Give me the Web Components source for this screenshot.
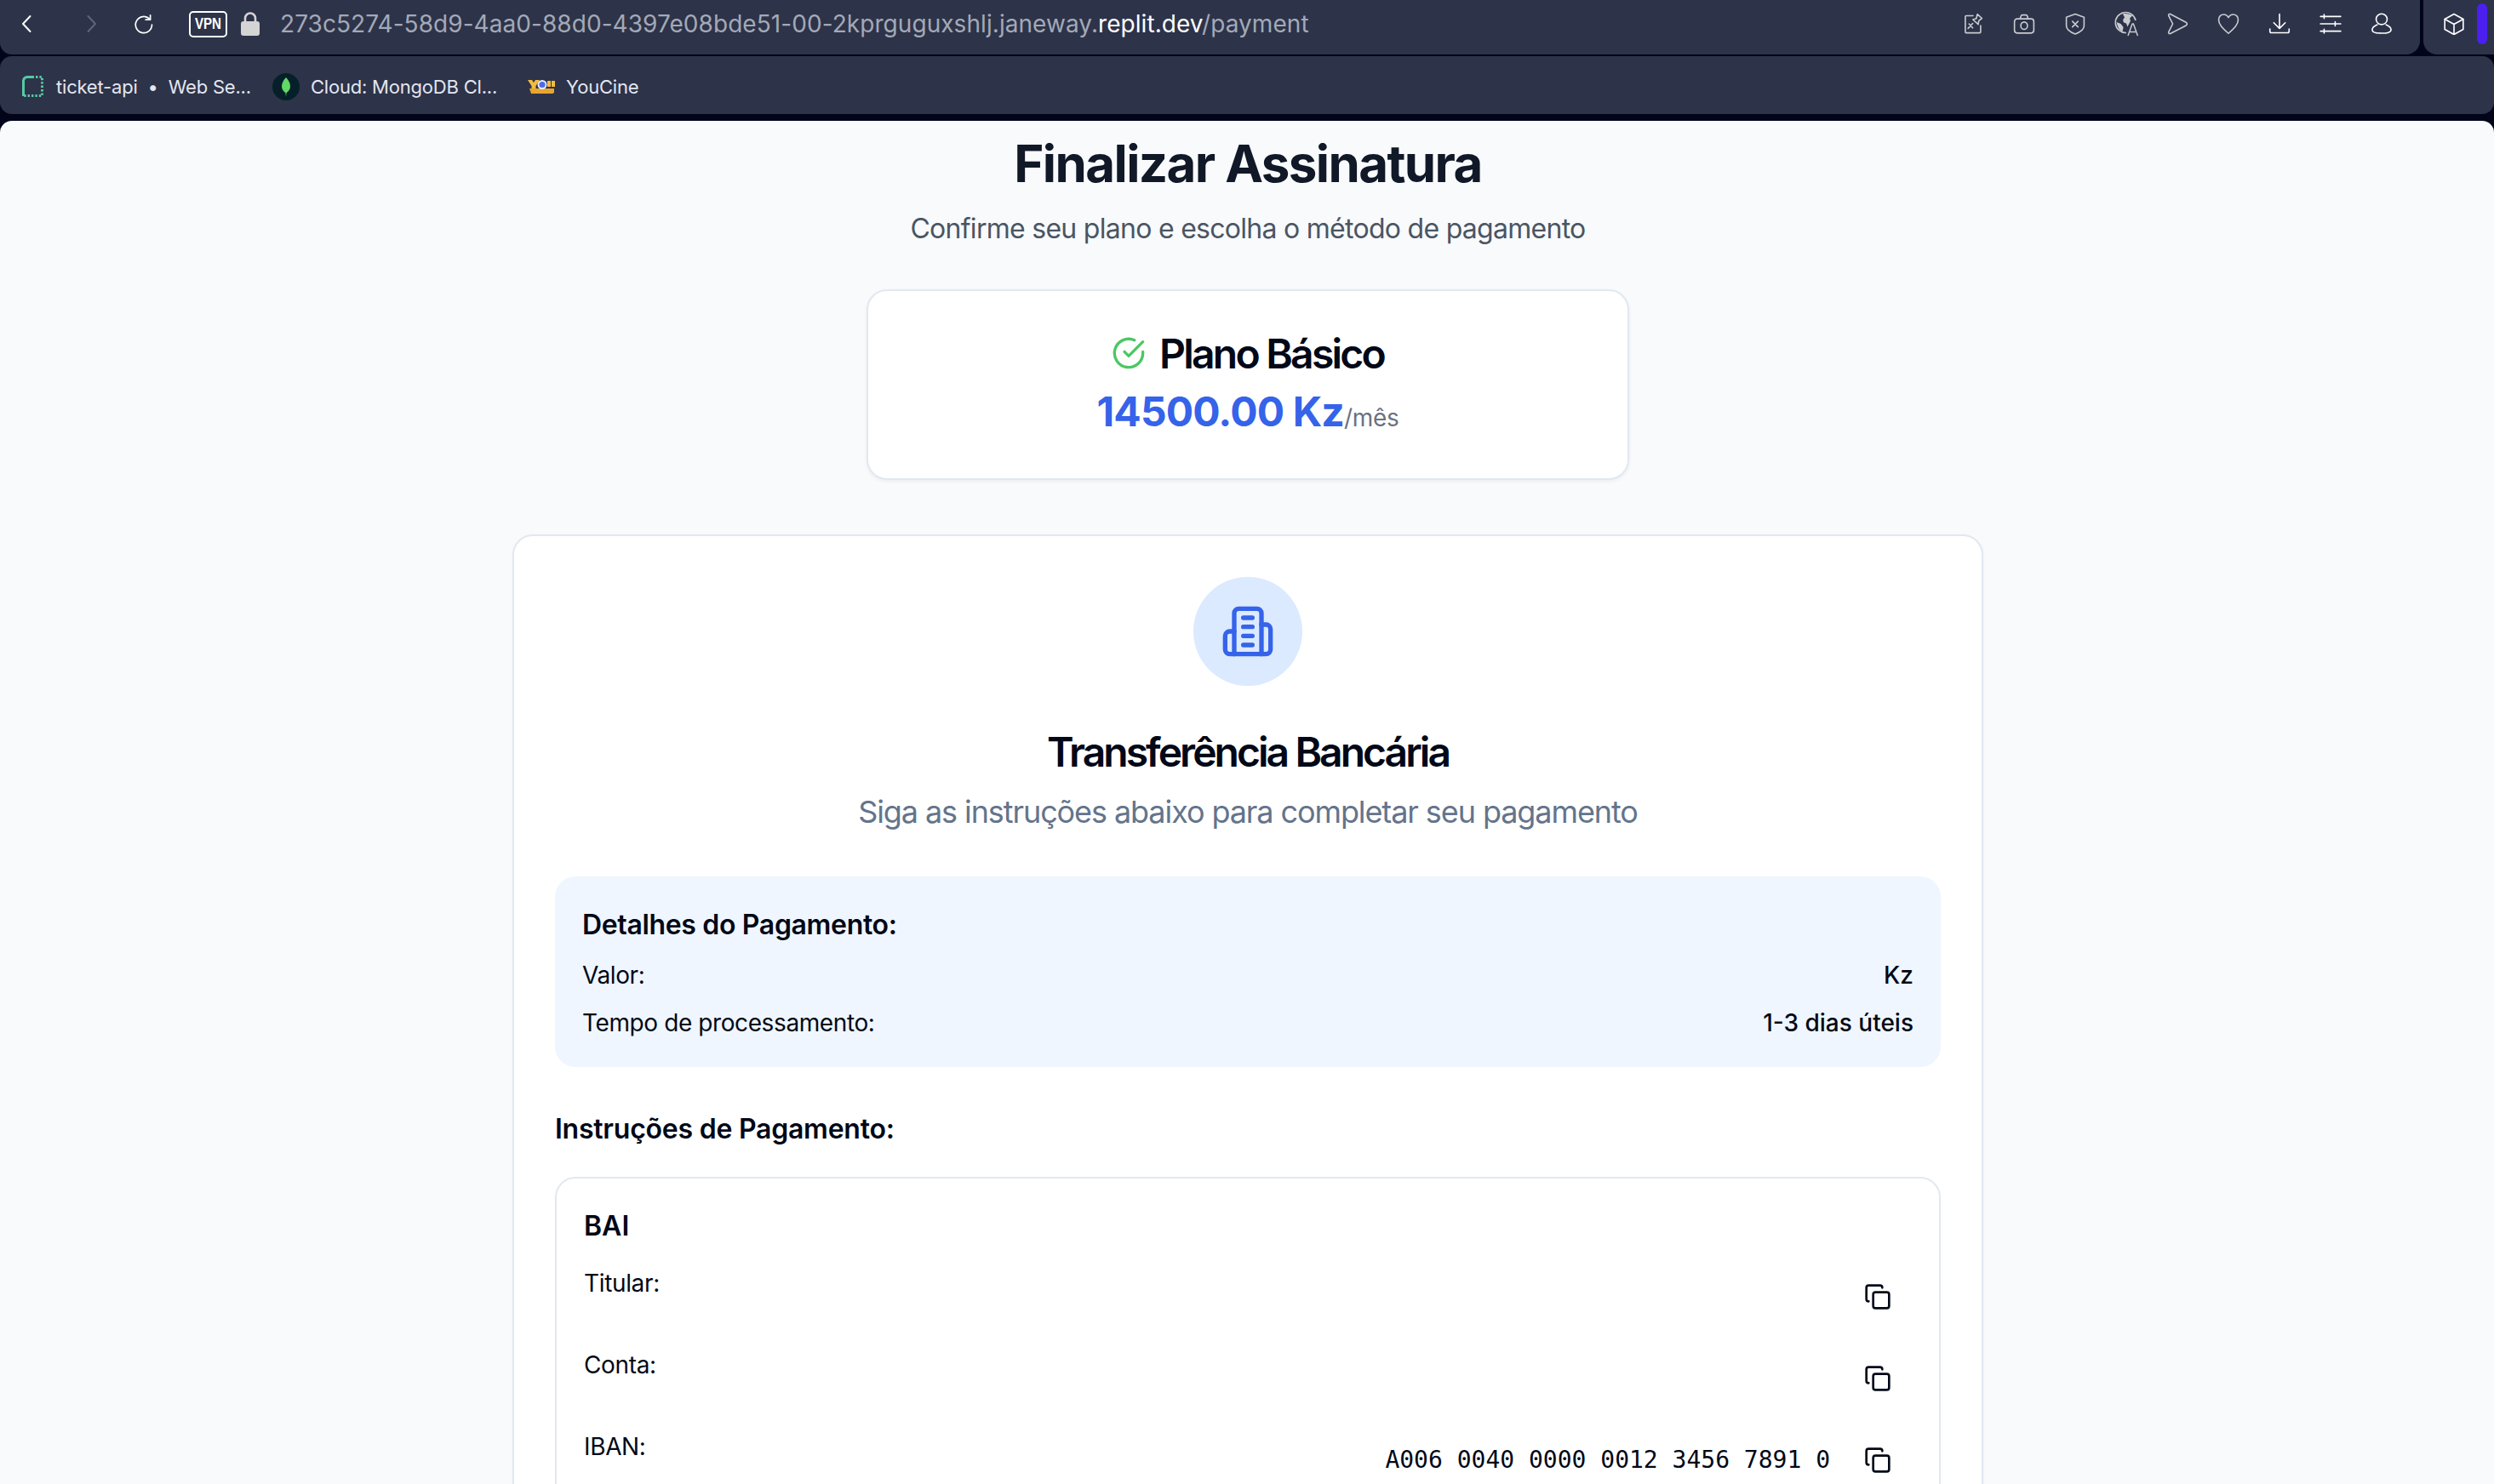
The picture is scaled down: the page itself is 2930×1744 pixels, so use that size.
<!DOCTYPE html>
<html lang="pt">
<head>
<meta charset="utf-8">
<title>Finalizar Assinatura</title>
<style>
  html, body { margin: 0; height: 100%; overflow: hidden; background: #02051a; }
  body { font-family: Inter, "Liberation Sans", sans-serif; color: #020817; }
</style>
</head>
<body>
<browser-chrome url-start="273c5274-58d9-4aa0-88d0-4397e08bde51-00-2kprguguxshlj.janeway." url-host="replit.dev" url-end="/payment"></browser-chrome>
<bookmark-bar>
  <bookmark-item icon="replit"><span>ticket-api</span><span class="dot">&nbsp;&nbsp;•&nbsp;&nbsp;</span><span>Web Se...</span></bookmark-item>
  <bookmark-item icon="mongo">Cloud: MongoDB Cl...</bookmark-item>
  <bookmark-item icon="youcine">YouCine</bookmark-item>
</bookmark-bar>
<payment-page>
  <plan-card slot="plan" name="Plano Básico" price="14500.00 Kz" period="/mês"></plan-card>
  <method-card slot="method" title="Transferência Bancária" subtitle="Siga as instruções abaixo para completar seu pagamento">
    <detail-box heading="Detalhes do Pagamento:">
      <detail-row label="Valor:" value="Kz"></detail-row>
      <detail-row label="Tempo de processamento:" value="1-3 dias úteis"></detail-row>
    </detail-box>
    <h-label>Instruções de Pagamento:</h-label>
    <bank-account name="BAI">
      <copy-row label="Titular:"></copy-row>
      <copy-row label="Conta:"></copy-row>
      <copy-row label="IBAN:" value="A006 0040 0000 0012 3456 7891 0"></copy-row>
    </bank-account>
  </method-card>
</payment-page>

<script>
// line icons, all drawn on a 24 box
const ICONS = {
  back: '<path d="M15.5 3 7 12l8.5 9"/>',
  forward: '<path d="M8.5 3 17 12l-8.5 9"/>',
  reload: '<path d="M18.6 6.2A9.6 9.6 0 1 0 21.5 13"/><path d="M19.6 1.8v5.4h-5.4" />',
  pin: '<path d="M12 3.2H4.6a1 1 0 0 0-1 1v16.6a1 1 0 0 0 1 1h14.6a1 1 0 0 0 1-1V14"/><path d="M16.6 1.6 21.6 6l-3.4 2.6-.6 4-5.8-5.2 3.8-1.2z"/><path d="m11.6 11.6-5 5.4M7.6 12l4 4.4"/>',
  camera: '<rect x="1.5" y="6.6" width="21" height="15.4" rx="3"/><path d="M7.6 6.6 8.6 3.4a1.4 1.4 0 0 1 1.3-1h4.2a1.4 1.4 0 0 1 1.3 1l1 3.2"/><ellipse cx="12" cy="14" rx="3.6" ry="4"/>',
  shield: '<path d="M12 1.4 21.6 4.8V14c0 4-4.4 7-9.6 9-5.2-2-9.6-5-9.6-9V4.8z"/><path d="m9 9.4 6 6M15 9.4l-6 6"/>',
  heart: '<path d="M12 22.4C5.6 16.6 1.4 12.6 1.4 7.6 1.4 4 4 1.8 6.8 1.8c2.2 0 4 1.2 5.2 3.4 1.2-2.2 3-3.4 5.2-3.4 2.8 0 5.4 2.2 5.4 5.8 0 5-4.2 9-10.6 14.8z"/>',
  play: '<path d="M2.6 3.4c-.6-1.6.8-2.6 2.2-1.8L21.4 10.4c1.6 1 1.6 2.4 0 3.4L4.8 22.4c-1.4.8-2.8-.2-2.2-1.8L7 12z"/>',
  download: '<path d="M12 1.5v15M5.8 10.8l6.2 6.2 6.2-6.2"/><path d="M1.6 17.5v2.6a1.6 1.6 0 0 0 1.6 1.6h17.6a1.6 1.6 0 0 0 1.6-1.6v-2.6"/>',
  sliders: '<path d="M1 4h22M1 12h22M1 20h22M5 1.8v4.4M17 9.8v4.4M5 17.8v4.4"/>',
  user: '<ellipse cx="12" cy="7" rx="6" ry="5.8"/><path d="M7.2 13C3.4 14.6 1.8 16.6 1.8 18.6c0 2.4 3 3.6 10.2 3.6s10.2-1.2 10.2-3.6c0-2-1.6-4-5.4-5.6"/>',
  box: '<path d="M12 1.4 22 7v11l-10 5.6L2 18V7z"/><path d="m2 7 10 5.4L22 7M12 12.4v11.2"/>',
  building: '<path d="M6 22V4a2 2 0 0 1 2-2h8a2 2 0 0 1 2 2v18Z"/><path d="M6 12H4a2 2 0 0 0-2 2v6a2 2 0 0 0 2 2h2"/><path d="M18 9h2a2 2 0 0 1 2 2v9a2 2 0 0 1-2 2h-2"/><path d="M10 6h4M10 10h4M10 14h4M10 18h4"/>',
  check: '<path d="M22 11.08V12a10 10 0 1 1-5.93-9.14"/><path d="M22 4 12 14.01l-3-3"/>',
  copy: '<rect x="8" y="8" width="14" height="14" rx="2"/><path d="M4 16c-1.1 0-2-.9-2-2V4c0-1.1.9-2 2-2h10c1.1 0 2 .9 2 2"/>'
}

customElements.define('line-icon', class extends HTMLElement {
  connectedCallback() {
    const size = this.getAttribute('size') || 24
    const weight = this.getAttribute('weight') || 2
    this.attachShadow({mode: 'open'}).innerHTML = `
      <style>
        :host { display: inline-flex; flex: none; color: inherit; }
        svg { display: block; }
      </style>
      <svg width="${size}" height="${size}" viewBox="0 0 24 24" fill="none" stroke="currentColor"
        stroke-width="${weight}" stroke-linecap="round" stroke-linejoin="round">${ICONS[this.getAttribute('name')]}</svg>`
  }
})

customElements.define('browser-chrome', class extends HTMLElement {
  connectedCallback() {
    const dim = ['pin', 'camera', 'shield', 'globe', 'play', 'heart']
    const bright = ['download', 'sliders', 'user']
    const globe = `<svg width="30" height="30" viewBox="0 0 30 30" fill="none" stroke="#c9cbd0" stroke-width="1.6" stroke-linejoin="round">
        <path d="M15 25.5A12 12 0 1 1 26 11"/>
        <path fill="#c9cbd0" stroke="none" d="M11 3.5c4 -1 9 0 11 2l-3 3 1 3-2 4-1.6 3-1.4-4-3-1-1-3 2-3zM3.6 13l5 2 3 4-1 5c-4-1-6-6-7-11z"/>
        <path d="M17 29l5-14h1.4l5 14M18.6 24.6h8.800" stroke-width="1.5"/></svg>`
    this.attachShadow({mode: 'open'}).innerHTML = `
      <style>
        :host { display: flex; gap: 4px; height: 64px; margin-bottom: 2px; }
        .bar { flex: 1; display: flex; align-items: center; background: #2d3349; border-radius: 0 0 16px 14px; padding: 0 15px 8px 0; }
        .nav { display: flex; align-items: center; color: #fff; }
        .nav line-icon:nth-child(1) { margin-left: 20px; }
        .nav line-icon:nth-child(2) { margin-left: 51px; color: #5f6577; }
        .nav line-icon:nth-child(3) { margin-left: 38px; }
        .vpn { margin-left: 41px; width: 45px; height: 31px; box-sizing: border-box; border: 2px solid #fff; border-radius: 5px;
          color: #fff; font: 700 18px/27px "Liberation Sans", sans-serif; text-align: center; }
        .vpn span { display: block; transform: scaleX(.84); }
        .lock { margin-left: 16px; display: block; }
        .url { margin-left: 24px; flex: 1; font: 400 28px/56px Inter, sans-serif; letter-spacing: 0.06px; color: #a3a9b7; white-space: nowrap; }
        .url b { font-weight: 400; color: #fff; }
        .tools { display: flex; }
        .tools > * { width: 60px; display: flex; justify-content: center; align-items: center; color: #c9cbd0; }
        .tools > .on { color: #fff; }
        .side { width: 83px; position: relative; background: #2d3349; border-radius: 0 0 0 16px; display: flex; align-items: center; color: #fff; padding: 0 0 8px 23px; box-sizing: border-box; }
        .mark { position: absolute; right: 8px; top: 4px; width: 12px; height: 48px; border-radius: 6px; background: #4a1ff0; }
      </style>
      <div class="bar">
        <div class="nav">
          <line-icon name="back" size="24"></line-icon>
          <line-icon name="forward" size="24"></line-icon>
          <line-icon name="reload" size="24" weight="1.7"></line-icon>
        </div>
        <div class="vpn"><span>VPN</span></div>
        <svg class="lock" width="22" height="28" viewBox="0 0 22 28"><path fill="none" stroke="#d4d4d4" stroke-width="2.6" d="M5 13V7.5a6 6 0 0 1 12 0V13"/><rect y="11" width="22" height="17" rx="3" fill="#d4d4d4"/></svg>
        <div class="url">${this.getAttribute('url-start')}<b>${this.getAttribute('url-host')}</b>${this.getAttribute('url-end')}</div>
        <div class="tools">
          ${dim.map(n => n == 'globe' ? `<span>${globe}</span>` : `<span><line-icon name="${n}" size="26" weight="1.5"></line-icon></span>`).join('')}
          ${bright.map(n => `<span class="on"><line-icon name="${n}" size="26" weight="1.5"></line-icon></span>`).join('')}
        </div>
      </div>
      <div class="side"><line-icon name="box" size="26" weight="1.5"></line-icon><i class="mark"></i></div>`
  }
})

customElements.define('bookmark-bar', class extends HTMLElement {
  constructor() {
    super()
    this.attachShadow({mode: 'open'}).innerHTML = `
      <style>
        :host { display: flex; align-items: center; height: 68px; background: #2d3349; border-radius: 14px; padding: 3px 0 0 26px; box-sizing: border-box; gap: 25px; }
      </style>
      <slot></slot>`
  }
})

customElements.define('bookmark-item', class extends HTMLElement {
  connectedCallback() {
    const marks = {
      replit: `<svg width="25" height="25" viewBox="0 0 25 25" fill="none" stroke="#56c9a4" stroke-width="3"><path d="M1.5 24V6a4.5 4.5 0 0 1 4.5-4.5h8"/><path stroke-dasharray="2.4 2" d="M16 1.5h7.5v22H2"/></svg>`,
      mongo: `<svg width="32" height="32" viewBox="0 0 32 32"><circle cx="16" cy="16" r="16" fill="#06202a"/><path fill="#62d866" d="M16 5c3 3.500 5 6.500 5 10.500 0 3.500-2.200 6-4.400 7.500L16 27.500l-.6-4.500C13.200 21.500 11 19 11 15.500c0-4 2-7 5-10.500z"/></svg>`,
      youcine: `<svg width="33" height="16" viewBox="0 0 33 16"><path fill="#f2bd3e" d="M0 0h5l2 3 2-3h5L9.500 7v3h-5V7zM23 1h4v7h-4zM28 1h4v7h-4z"/><path fill="#e8a52f" d="M2 10h29v5l-2 1H4z"/><circle cx="17" cy="5.500" r="5.500" fill="#e9edfb"/><circle cx="17" cy="5.500" r="3.600" fill="#4f6ae8"/></svg>`
    }
    const icon = this.getAttribute('icon')
    this.attachShadow({mode: 'open'}).innerHTML = `
      <style>
        :host { display: flex; align-items: center; gap: 13px; font: 400 22px/32px Inter, sans-serif; letter-spacing: -0.2px; color: #e4e6ef; white-space: nowrap; }
        :host([icon=replit]) { gap: 15px; }
        :host([icon=youcine]) { margin-left: 11px; gap: 12px; }
        svg { display: block; flex: none; }
      </style>
      ${marks[icon]}<span><slot></slot></span>`
  }
})

customElements.define('payment-page', class extends HTMLElement {
  constructor() {
    super()
    this.attachShadow({mode: 'open'}).innerHTML = `
      <style>
        :host { display: block; margin-top: 8px; height: 1602px; padding-left: 2px; box-sizing: border-box; overflow: hidden; background: #f8fafc; border-radius: 14px 14px 0 0; text-align: center; }
        .wrap { width: 1728px; margin: 0 auto; padding-top: 14px; }
        h1 { margin: 0; font: 700 60px/72px Inter, sans-serif; color: #111827; letter-spacing: -1.6px; }
        p { margin: 13px 0 0; font: 400 32px/56px Inter, sans-serif; color: #4b5563; letter-spacing: -0.72px; }
        ::slotted([slot=plan]) { margin: 43px auto 0; }
        ::slotted([slot=method]) { margin-top: 64px; }
      </style>
      <div class="wrap">
        <h1>Finalizar Assinatura</h1>
        <p>Confirme seu plano e escolha o método de pagamento</p>
        <slot name="plan"></slot>
        <slot name="method"></slot>
      </div>`
  }
})

customElements.define('plan-card', class extends HTMLElement {
  connectedCallback() {
    this.attachShadow({mode: 'open'}).innerHTML = `
      <style>
        :host { display: block; width: 896px; height: 224px; box-sizing: border-box; background: #fff; border: 2px solid #e2e8f0; border-radius: 24px; box-shadow: 0 2px 4px rgba(0,0,0,.05); padding-top: 50px; }
        .name { display: flex; justify-content: center; align-items: center; gap: 16px; font: 600 48px/48px Inter, sans-serif; letter-spacing: -2.76px; color: #020817; }
        line-icon { color: #4cc764; margin-top: -3px; }
        .price { margin-top: 12px; font: 700 48px/64px Inter, sans-serif; color: #3563e9; letter-spacing: -0.85px; }
        .price span { font: 400 28px/40px Inter, sans-serif; color: #6b7280; letter-spacing: -0.3px; }
      </style>
      <div class="name"><line-icon name="check" size="40"></line-icon>${this.getAttribute('name')}</div>
      <div class="price">${this.getAttribute('price')}<span>${this.getAttribute('period')}</span></div>`
  }
})

customElements.define('method-card', class extends HTMLElement {
  connectedCallback() {
    this.attachShadow({mode: 'open'}).innerHTML = `
      <style>
        :host { display: block; box-sizing: border-box; background: #fff; border: 2px solid #e2e8f0; border-radius: 24px; padding: 48px; text-align: left; box-shadow: 0 2px 4px rgba(0,0,0,.04); }
        .badge { width: 128px; height: 128px; margin: 0 auto; border-radius: 50%; background: #dbeafe; color: #3563e9; display: flex; align-items: center; justify-content: center; }
        h2 { margin: 50px 0 0; text-align: center; font: 600 48px/56px Inter, sans-serif; letter-spacing: -2.95px; color: #020817; }
        p { margin: 14px 0 48px; text-align: center; font: 400 36px/56px Inter, sans-serif; color: #64748b; letter-spacing: -1.09px; }
      </style>
      <div class="badge"><line-icon name="building" size="64"></line-icon></div>
      <h2>${this.getAttribute('title')}</h2>
      <p>${this.getAttribute('subtitle')}</p>
      <slot></slot>`
  }
})

customElements.define('detail-box', class extends HTMLElement {
  connectedCallback() {
    this.attachShadow({mode: 'open'}).innerHTML = `
      <style>
        :host { display: block; background: #eff6ff; border-radius: 24px; padding: 33px 32px 0; height: 224px; box-sizing: border-box; }
        h3 { margin: 0 0 15px; font: 600 32px/48px Inter, sans-serif; letter-spacing: -0.34px; color: #020817; }
      </style>
      <h3>${this.getAttribute('heading')}</h3>
      <slot></slot>`
  }
})

customElements.define('detail-row', class extends HTMLElement {
  connectedCallback() {
    this.attachShadow({mode: 'open'}).innerHTML = `
      <style>
        :host { display: flex; justify-content: space-between; font: 400 28px/40px Inter, sans-serif; color: #020817; margin-bottom: 16px; }
        span { letter-spacing: -0.4px; }
        b { font-weight: 500; }
      </style>
      <span>${this.getAttribute('label')}</span><b>${this.getAttribute('value')}</b>`
  }
})

customElements.define('h-label', class extends HTMLElement {
  constructor() {
    super()
    this.attachShadow({mode: 'open'}).innerHTML = `
      <style>
        :host { display: block; margin: 49px 0 32px; font: 600 32px/48px Inter, sans-serif; letter-spacing: -0.24px; color: #020817; }
      </style>
      <slot></slot>`
  }
})

customElements.define('bank-account', class extends HTMLElement {
  connectedCallback() {
    this.attachShadow({mode: 'open'}).innerHTML = `
      <style>
        :host { display: block; border: 2px solid #e2e8f0; border-radius: 24px; padding: 32px; }
        h4 { margin: 0 0 23px; font: 600 32px/48px Inter, sans-serif; color: #020817; }
      </style>
      <h4>${this.getAttribute('name')}</h4>
      <slot></slot>`
  }
})

customElements.define('copy-row', class extends HTMLElement {
  connectedCallback() {
    this.attachShadow({mode: 'open'}).innerHTML = `
      <style>
        :host { display: flex; justify-content: space-between; margin-bottom: 24px; font: 400 28px/40px Inter, sans-serif; color: #020817; }
        span { letter-spacing: -0.35px; }
        .right { display: flex; align-items: center; gap: 20px; height: 72px; margin-right: 4px; }
        code { font: 400 28px/40px "DejaVu Sans Mono", monospace; }
        button { width: 72px; height: 72px; padding: 0; border: 0; background: none; color: inherit; display: flex; align-items: center; justify-content: center; }
      </style>
      <span>${this.getAttribute('label')}</span>
      <div class="right"><code>${this.getAttribute('value') || ''}</code><button><line-icon name="copy" size="32"></line-icon></button></div>`
  }
})
</script>
</body>
</html>
